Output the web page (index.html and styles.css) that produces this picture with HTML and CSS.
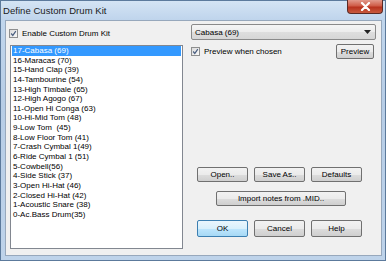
FILE: index.html
```html
<!DOCTYPE html>
<html>
<head>
<meta charset="utf-8">
<link rel="stylesheet" href="styles.css">
</head>
<body>
<div class="window">
  <div class="titlebar">
    <span class="title">Define Custom Drum Kit</span>
    <div class="close"><svg width="11" height="9" viewBox="0 0 11 9"><path d="M2 1 L9 8 M9 1 L2 8" stroke="#fff" stroke-width="2.2" stroke-linecap="round"/></svg></div>
  </div>
  <div class="client">
    <div class="left">
      <label class="check enable"><span class="box"><svg width="9" height="9" viewBox="0 0 9 9"><path d="M1.5 4.5 L3.6 7 L7.5 1.5" stroke="#4a5f80" stroke-width="1.5" fill="none"/></svg></span>Enable Custom Drum Kit</label>
      <div class="listbox">
        <div class="item sel">17-Cabasa (69)</div>
        <div class="item">16-Maracas (70)</div>
        <div class="item">15-Hand Clap (39)</div>
        <div class="item">14-Tambourine (54)</div>
        <div class="item">13-High Timbale (65)</div>
        <div class="item">12-High Agogo (67)</div>
        <div class="item">11-Open Hi Conga (63)</div>
        <div class="item">10-Hi-Mid Tom (48)</div>
        <div class="item">9-Low Tom &nbsp;(45)</div>
        <div class="item">8-Low Floor Tom (41)</div>
        <div class="item">7-Crash Cymbal 1(49)</div>
        <div class="item">6-Ride Cymbal 1 (51)</div>
        <div class="item">5-Cowbell(56)</div>
        <div class="item">4-Side Stick (37)</div>
        <div class="item">3-Open Hi-Hat (46)</div>
        <div class="item">2-Closed Hi-Hat (42)</div>
        <div class="item">1-Acoustic Snare (38)</div>
        <div class="item">0-Ac.Bass Drum(35)</div>
      </div>
    </div>
    <div class="right">
      <div class="combo"><span>Cabasa (69)</span><svg width="7" height="4" viewBox="0 0 7 4"><path d="M0 0 H7 L3.5 4 Z" fill="#222"/></svg></div>
      <div class="preview-row">
        <label class="check"><span class="box"><svg width="9" height="9" viewBox="0 0 9 9"><path d="M1.5 4.5 L3.6 7 L7.5 1.5" stroke="#4a5f80" stroke-width="1.5" fill="none"/></svg></span>Preview when chosen</label>
        <button class="btn preview">Preview</button>
      </div>
      <div class="spacer"></div>
      <div class="btnrow">
        <button class="btn w50">Open..</button>
        <button class="btn w50">Save As..</button>
        <button class="btn w50">Defaults</button>
      </div>
      <div class="btnrow center">
        <button class="btn import">Import notes from .MID..</button>
      </div>
      <div class="btnrow last">
        <button class="btn w50 default">OK</button>
        <button class="btn w50">Cancel</button>
        <button class="btn w50">Help</button>
      </div>
    </div>
  </div>
</div>
</body>
</html>
```
FILE: styles.css
```css
* { box-sizing: border-box; }
html, body { margin: 0; padding: 0; }
body {
  width: 386px; height: 261px; overflow: hidden;
  font-family: "Liberation Sans", Arial, sans-serif;
  font-size: 8px;
  color: #000;
}
.window {
  width: 386px; height: 261px;
  border: 1px solid #5c7a9c;
  background: linear-gradient(180deg, #c3d8ee 0%, #b7cde6 40%, #bed3ea 100%);
  display: flex; flex-direction: column;
  position: relative;
}
.titlebar {
  height: 19px;
  display: flex; align-items: center;
  padding-left: 2px;
  background: linear-gradient(180deg, #d4e4f4 0%, #bfd4ec 100%);
}
.title {
  font-family: "Liberation Sans", Arial, sans-serif;
  font-size: 9.5px;
  color: #1a1a1a;
  letter-spacing: 0.05px;
}
.close {
  position: absolute; top: -1px; right: 2px;
  width: 36px; height: 14px;
  border: 1px solid #5a2a24; border-top: none;
  border-radius: 0 0 4px 4px;
  background: linear-gradient(180deg, #e29a8c 0%, #cf5c48 45%, #b8321e 55%, #c85a3e 100%);
  display: flex; align-items: center; justify-content: center;
}
.client {
  flex: 1;
  margin: 0 3px 4px 4px;
  background: #f0f0f0;
  border: 1px solid #97a8bc;
  display: flex;
  padding: 3px 5px 6px 4px;
}
.left { width: 173px; display: flex; flex-direction: column; }
.check { display: flex; align-items: center; gap: 4px; height: 11px; white-space: nowrap; }
.enable { margin-top: 4px; margin-left: -1px; }
.box {
  width: 9px; height: 9px;
  border: 1px solid #8e8f8f;
  background: linear-gradient(135deg, #dcdcdc, #f9f9f9);
  display: flex; align-items: center; justify-content: center;
}
.box svg { display: block; }
.listbox {
  margin-top: 6px;
  flex: 1;
  background: #fff;
  border: 1px solid #828790;
  padding: 0 1px;
}
.item { height: 9.65px; line-height: 9.65px; padding-left: 1px; white-space: nowrap; }
.item.sel { background: #3399ff; color: #fff; }
.right {
  flex: 1; margin-left: 8px;
  display: flex; flex-direction: column;
  padding-bottom: 12px;
}
.combo {
  height: 16px;
  border: 1px solid #8a8a8a;
  border-radius: 2px;
  background: linear-gradient(180deg, #f5f5f5 0%, #ececec 50%, #dedede 51%, #d6d6d6 100%);
  display: flex; align-items: center; justify-content: space-between;
  padding: 0 4px 0 3px;
}
.preview-row {
  margin-top: 4px;
  display: flex; justify-content: space-between; align-items: center;
}
.btn {
  font-family: "Liberation Sans", Arial, sans-serif;
  font-size: 8px;
  color: #000;
  height: 15px;
  padding: 0;
  border: 1px solid #707070;
  border-radius: 2px;
  background: linear-gradient(180deg, #f2f2f2 0%, #ebebeb 50%, #dddddd 51%, #cfcfcf 100%);
}
.preview { width: 38px; margin-right: 2px; }
.spacer { flex: 1; }
.btnrow { display: flex; gap: 6px; padding-left: 6px; }
.btnrow.center { margin-top: 9px; padding-left: 25px; }
.btnrow.last { margin-top: 14px; }
.btnrow.last .btn { height: 17px; }
.w50 { width: 51px; }
.import { width: 130px; }
.btn.default {
  border-color: #3c7fb1;
  background: linear-gradient(180deg, #eaf6fd 0%, #d9f0fc 50%, #bee6fd 51%, #a7d9f5 100%);
}
```
